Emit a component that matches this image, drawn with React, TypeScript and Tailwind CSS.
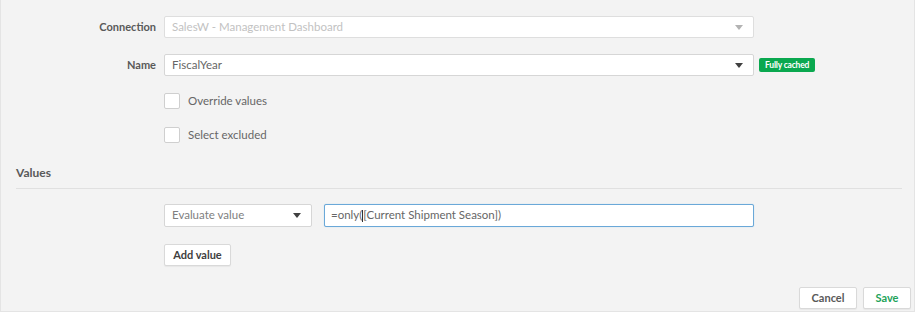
import React from 'react';

const Caret = ({ dark }: { dark?: boolean }) => (
  <svg width="8" height="5" viewBox="0 0 8 5" className="shrink-0">
    <path d="M0 0h8L4 5z" fill={dark ? '#404040' : '#b3b3b3'} />
  </svg>
);

const Checkbox = ({ label }: { label: string }) => (
  <label className="flex items-center gap-[8px]">
    <span className="w-[16px] h-[16px] rounded-[2px] border border-[#cfcfcf] bg-white" />
    <span className="text-[11.5px] text-[#666]">{label}</span>
  </label>
);

const Btn = ({ children, className = '' }: { children: React.ReactNode; className?: string }) => (
  <button
    className={`h-[22px] rounded-[2px] border border-[#d9d9d9] bg-white text-[11px] font-bold shadow-[0_1px_1px_rgba(0,0,0,0.05)] ${className}`}
  >
    {children}
  </button>
);

export default function App() {
  return (
    <div className="w-[923px] h-[319px] bg-white font-['Lato',sans-serif]">
      <div className="w-[915px] h-[312px] bg-[#f3f3f3] border-l border-r border-b border-[#e4e4e4] flex flex-col">
        <div className="flex flex-col pt-[16px]">
          <div className="flex items-center">
            <div className="w-[163px] pr-[8px] text-right text-[11px] font-bold text-[#595959]">Connection</div>
            <div className="w-[590px] h-[22px] flex items-center justify-between pl-[7px] pr-[10px] bg-white border border-[#dedede] rounded-[2px]">
              <span className="text-[11.5px] text-[#c2c2c2]">SalesW - Management Dashboard</span>
              <Caret />
            </div>
          </div>
          <div className="flex items-center mt-[16px]">
            <div className="w-[163px] pr-[8px] text-right text-[11px] font-bold text-[#595959]">Name</div>
            <div className="w-[590px] h-[22px] flex items-center justify-between pl-[7px] pr-[10px] bg-white border border-[#d6d6d6] rounded-[2px]">
              <span className="text-[11.5px] text-[#666]">FiscalYear</span>
              <Caret dark />
            </div>
            <span className="ml-[5px] h-[14px] px-[6px] flex items-center rounded-[2px] bg-[#0aa84f] text-white text-[8.5px] font-bold tracking-[-0.2px]">
              Fully cached
            </span>
          </div>
          <div className="pl-[163px] mt-[16px] flex flex-col gap-[17px]">
            <Checkbox label="Override values" />
            <Checkbox label="Select excluded" />
          </div>
        </div>

        <div className="mt-[20px] ml-[15px] mr-[12px] pb-[6px] border-b border-[#e0e0e0] text-[12px] font-bold text-[#595959]">
          Values
        </div>

        <div className="pl-[163px] mt-[15px] flex items-center">
          <div className="w-[148px] h-[23px] flex items-center justify-between pl-[7px] pr-[10px] bg-white border border-[#d6d6d6] rounded-[2px]">
            <span className="text-[11.5px] text-[#808080]">Evaluate value</span>
            <Caret dark />
          </div>
          <div className="ml-[12px] w-[430px] h-[23px] flex items-center pl-[6px] bg-white border border-[#6aa8d8] rounded-[2px] shadow-[0_0_1px_#9cc5e6]">
            <span className="text-[11.5px] text-[#666]">
              =only(
              <span className="inline-block w-[1px] h-[12px] bg-[#333] align-middle" />
              [Current Shipment Season])
            </span>
          </div>
        </div>

        <div className="pl-[163px] mt-[14px]">
          <Btn className="w-[67px] text-[#404040]">Add value</Btn>
        </div>

        <div className="mt-auto mb-[2px] flex justify-end gap-[6px] pr-[3px]">
          <Btn className="w-[58px] text-[#595959]">Cancel</Btn>
          <Btn className="w-[48px] text-[#23a35a]">Save</Btn>
        </div>
      </div>
    </div>
  );
}
